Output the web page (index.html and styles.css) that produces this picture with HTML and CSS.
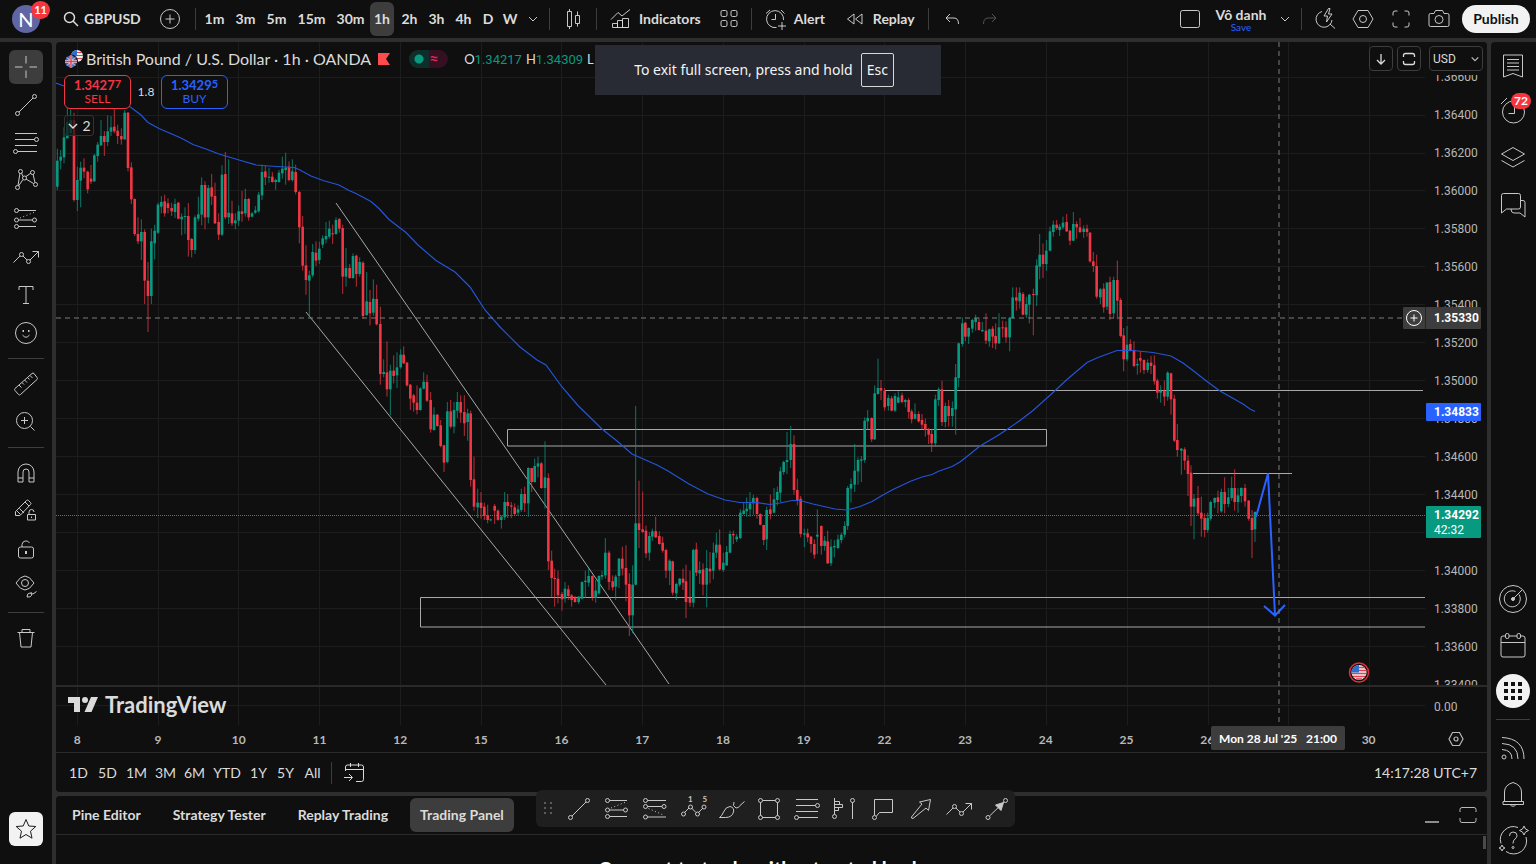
FILE: index.html
```html
<!DOCTYPE html>
<html lang="en">
<head>
<meta charset="UTF-8">
<meta name="viewport" content="width=device-width, initial-scale=1.0">
<title>GBPUSD 1.34292</title>
<link rel="stylesheet" href="styles.css">
</head>
<body>
  <!-- icons used more than once -->
  <svg class="sprite" aria-hidden="true">
    <symbol id="i-trend" viewBox="0 0 28 28"><path d="M7 21 21 7"/><circle cx="5.500" cy="22.500" r="2"/><circle cx="22.500" cy="5.500" r="2"/></symbol>
    <symbol id="i-fib" viewBox="0 0 28 28"><path d="M3 4.500h22M3 10.500h19.500M3 16.500h22M5.500 22.500H25"/><circle cx="24.500" cy="10.500" r="2"/><circle cx="3.500" cy="22.500" r="2"/></symbol>
    <symbol id="i-forecast" viewBox="0 0 28 28"><path d="M6.500 5.500H24M6.500 15H20.500M6.500 21.500H24"/><path stroke-dasharray="1 2.500" d="M8 13 23 7"/><circle cx="4.500" cy="5.500" r="2"/><circle cx="4.500" cy="15" r="2"/><circle cx="22.500" cy="15" r="2"/><circle cx="4.500" cy="21.500" r="2"/></symbol>
    <symbol id="i-path" viewBox="0 0 28 28"><path d="M1.500 19.500 8 13M11 13l4 4M18 17l8.500-8.500M20.500 8.500h6v6"/><circle cx="9.500" cy="11.500" r="2"/><circle cx="16.500" cy="18.500" r="2"/></symbol>
    <symbol id="i-down" viewBox="0 0 12 12"><path d="m2 4 4 4 4-4"/></symbol>
    <symbol id="i-expand" viewBox="0 0 18 18"><path d="M1 6V3.500Q1 1.500 3 1.500h12q2 0 2 2V6M1 12v2.500q0 2 2 2h12q2 0 2-2V12"/></symbol>
  </svg>

  <header class="topbar">
    <button class="avatar" aria-label="Account">N<span class="badge">11</span></button>
    <button class="symbol-search"><svg class="ico" width="18" height="18" viewBox="0 0 18 18" stroke-width="1.500"><circle cx="7.500" cy="7.500" r="5"/><path d="m11 11 5 5"/></svg>GBPUSD</button>
    <button class="tool add-symbol" aria-label="Compare"><svg class="ico" width="28" height="28" viewBox="0 0 28 28"><circle cx="14" cy="14" r="9.500"/><path d="M14 9.500v9M9.500 14h9"/></svg></button>
    <span class="sep"></span>
    <nav class="intervals">
      <button>1m</button><button>3m</button><button>5m</button><button class="wide">15m</button><button class="wide">30m</button><button class="active">1h</button><button class="hour">2h</button><button class="hour">3h</button><button class="hour">4h</button><button class="day">D</button><button class="day">W</button>
    </nav>
    <button class="tool slim" aria-label="More intervals"><svg class="ico" width="12" height="12"><use href="#i-down"/></svg></button>
    <span class="sep"></span>
    <button class="tool big" aria-label="Candles"><svg class="ico" width="28" height="28" viewBox="0 0 28 28"><path d="M8.500 6.500h4v15h-4zM10.500 4v2.500M10.500 21.500V24M16.500 10.500h4v8h-4zM18.500 6.500v4M18.500 18.500v3"/></svg></button>
    <span class="sep"></span>
    <button class="tool text indicators"><svg class="ico" width="28" height="28" viewBox="0 0 28 28"><path d="M5.500 22.500v-4h5v4M10.500 22.500v-7h5v7M15.500 22.500v-9h6v9zM5.500 22.500h16M4 14.500l7-7 4 3.500 8-6.500"/></svg>Indicators</button>
    <button class="tool templates" aria-label="Indicator templates"><svg class="ico" width="28" height="28" viewBox="0 0 28 28"><rect x="6" y="5.500" width="6" height="6" rx="1.500"/><rect x="16" y="5.500" width="6" height="6" rx="1.500"/><rect x="6" y="15.500" width="6" height="6" rx="1.500"/><rect x="16" y="15.500" width="6" height="6" rx="1.500"/></svg></button>
    <span class="sep"></span>
    <button class="tool text alert"><svg class="ico" width="28" height="28" viewBox="0 0 28 28"><path d="M21.500 15a8.500 8.500 0 1 0-7 7.500M13.500 9v5.500H9.500M4 8.500 8 5M22.500 8.500 19 5M20 17v8M16 21h8"/></svg>Alert</button>
    <button class="tool text replay"><svg class="ico" width="28" height="28" viewBox="0 0 28 28"><path d="M13 9v10L6.500 14zM21 9v10l-6.500-5z"/></svg>Replay</button>
    <span class="sep"></span>
    <button class="tool" aria-label="Undo"><svg class="ico" width="28" height="28" viewBox="0 0 28 28"><path d="m12 9-4 4 4 4M8 13h8q4.500 0 4.500 6"/></svg></button>
    <button class="tool dim" aria-label="Redo"><svg class="ico" width="28" height="28" viewBox="0 0 28 28"><path d="m16 9 4 4-4 4M20 13h-8q-4.500 0-4.500 6"/></svg></button>

    <div class="topbar-right">
      <button class="tool" aria-label="Layout setup"><svg class="ico" width="28" height="28" viewBox="0 0 28 28"><rect x="4.500" y="5.500" width="19" height="17" rx="2"/></svg></button>
      <button class="layout-name">Vô danh<small>Save</small></button>
      <button class="tool slim" aria-label="Manage layouts"><svg class="ico" width="12" height="12"><use href="#i-down"/></svg></button>
      <span class="sep"></span>
      <button class="tool" aria-label="Quick search"><svg class="ico" width="28" height="28" viewBox="0 0 28 28"><path d="M11 6.500a8 8 0 1 0 10 8.500M19 19l5 4.500M17.500 3.500 13 11h3.500l-1 6 5.500-8h-3.500l1.500-5.500z"/></svg></button>
      <button class="tool" aria-label="Settings"><svg class="ico" width="28" height="28" viewBox="0 0 28 28"><path d="M9 5.500h10L24 14l-5 8.500H9L4 14z"/><circle cx="14" cy="14" r="3.500"/></svg></button>
      <button class="tool" aria-label="Fullscreen"><svg class="ico" width="28" height="28" viewBox="0 0 28 28"><path d="M6 10.500V8q0-2 2-2h2.500M17.500 6H20q2 0 2 2v2.500M22 17.500V20q0 2-2 2h-2.500M10.500 22H8q-2 0-2-2v-2.500"/></svg></button>
      <button class="tool" aria-label="Take a snapshot"><svg class="ico" width="28" height="28" viewBox="0 0 28 28"><path d="M5.500 8.500H9l1.500-3h7l1.500 3h3.500q1.500 0 1.500 1.500v10q0 1.500-1.500 1.500h-17Q4 21.500 4 20V10q0-1.500 1.500-1.500z"/><circle cx="14" cy="14.500" r="4"/></svg></button>
      <button class="publish">Publish</button>
    </div>
  </header>

  <div class="workspace">
    <aside class="left-tools">
      <button class="on" aria-label="Cross"><svg class="ico" width="28" height="28" viewBox="0 0 28 28"><path d="M14 3v7.500M14 17.500V25M3 14h7.500M17.500 14H25"/></svg></button>
      <button aria-label="Trend line"><svg class="ico" width="28" height="28"><use href="#i-trend"/></svg></button>
      <button aria-label="Fib retracement"><svg class="ico" width="28" height="28"><use href="#i-fib"/></svg></button>
      <button aria-label="Patterns"><svg class="ico" width="28" height="28" viewBox="0 0 28 28"><path d="m8 6-2 12.500M9.500 6 11 9.500M14 9.500 19 6M21 7l2 8.500M6.500 19 11 12.500M14 12l7.500 4.500"/><circle cx="8.500" cy="4.500" r="2"/><circle cx="20.500" cy="5.500" r="2"/><circle cx="12.500" cy="11" r="2"/><circle cx="5.500" cy="20.500" r="2"/><circle cx="23.500" cy="17.500" r="2"/></svg></button>
      <button aria-label="Forecasting"><svg class="ico" width="28" height="28"><use href="#i-forecast"/></svg></button>
      <button aria-label="Arrows"><svg class="ico" width="28" height="28"><use href="#i-path"/></svg></button>
      <button aria-label="Text"><svg class="ico" width="28" height="28" viewBox="0 0 28 28"><path d="M7 9V5.500h14V9M14 5.500v17M11 22.500h6"/></svg></button>
      <button aria-label="Icons"><svg class="ico" width="28" height="28" viewBox="0 0 28 28"><circle cx="14" cy="14" r="10.500"/><path d="M10.500 16q3.500 4.500 7 0"/><path stroke-width="2" d="M10.500 12h1.500M16 12h1.500"/></svg></button>
      <hr>
      <button aria-label="Measure"><svg class="ico" width="28" height="28" viewBox="0 0 28 28"><path d="M20 3.500 3 18.500q-1 1 0 2l3.500 4q1 1 2 0l16.500-15q1-1 0-2l-3-4q-1-1-2 0zM7 15l2.500 2.500M10 12.500l2 2M12.500 10l2.500 2.500M15.500 7.500l2 2M18 5.500l2.500 2.500"/></svg></button>
      <button aria-label="Zoom in"><svg class="ico" width="28" height="28" viewBox="0 0 28 28"><circle cx="12.500" cy="12.500" r="8"/><path d="m18.500 18.500 4 4M12.500 9v7M9 12.500h7"/></svg></button>
      <hr>
      <button aria-label="Magnet"><svg class="ico" width="28" height="28" viewBox="0 0 28 28"><path d="M6 23V13a8 8 0 0 1 16 0v10h-5V13a3 3 0 0 0-6 0v10zM6 19h5M17 19h5"/></svg></button>
      <button aria-label="Keep drawing"><svg class="ico" width="28" height="28" viewBox="0 0 28 28"><path d="M3.500 18.500v-4L14.500 3.500q1-1 2 0l2 2q1 1 0 2L8 18.500zM13 5l4 4M5 14l3.500 3.500M7.500 11.500 12 16M15.500 17.500h8v5.500h-8zM17 17.500V15a2.500 2.500 0 0 1 5 0M19.500 19.500v1.500"/></svg></button>
      <button aria-label="Lock drawings"><svg class="ico" width="28" height="28" viewBox="0 0 28 28"><rect x="6.500" y="12" width="15" height="11" rx="2"/><path d="M10 12V9.500a4 4 0 0 1 7.500-1.500"/><path stroke-width="2" d="M14 16v3"/></svg></button>
      <button aria-label="Hide drawings"><svg class="ico" width="28" height="28" viewBox="0 0 28 28"><path d="M4 10q9-14 18 0-9 14-18 0z"/><circle cx="13" cy="10" r="3.500"/><path d="M15 24q0-4 3-4 2.500.500 1.500 2.500T15 24zM19 19q0 2 2 2l3.500-2.500"/></svg></button>
      <hr>
      <button aria-label="Remove"><svg class="ico" width="28" height="28" viewBox="0 0 28 28"><path d="M5.500 8.500h17M10 8.500v-3h8v3M7.500 8.500 9 23h10l1.500-14.500"/></svg></button>
      <button class="star" aria-label="Favorite tools"><svg width="28" height="28" viewBox="0 0 28 28" fill="none" stroke="#1c1c1c"><path d="m14 4.500 2.800 6.500 7 .500-5.300 4.700 1.500 7-6-3.700-6 3.700 1.500-7-5.300-4.700 7-.500z"/></svg></button>
    </aside>

    <main class="center">
      <section class="chart-card">
        <div class="plot-row">
          <div class="plot">
            <svg id="chart" class="chart" viewBox="56 42 1369 683" preserveAspectRatio="none">
              <g id="grid" stroke="#1d1d1d"></g>
              <path stroke="#2a2a2a" stroke-width="2" d="M56 686H1425"/>
              <path stroke="#089981" stroke-dasharray="1 1" d="M56 515.500H1425"/>
              <g stroke="#a8a8a8" fill="none">
                <path d="M507.500 429.500H1046.500V446H507.500zM1425 597.500H420.500V627H1425M885 390.500H1423M1193 473.500H1292"/>
                <path d="M336 203 669 684M306 312 606 685"/>
              </g>
              <g id="candles"></g>
              <polyline fill="none" stroke="#2455d8" stroke-width="1.200" points="56,83 64,86 90,93 115,99 131,107.500 141,115 148,122.500 159,128.500 181,138 193,144.500 206,149 219,154 239,160 256,165 269,166 294,167.500 299,169.500 311,176 323,180.500 339,185 349,190.500 356,193.500 371,201.500 379,208.500 389,219.500 406,232.500 418,245 436,260.500 455,272 470,287 485,310 500,327 520,347 537,360 546,365 562,387 578,405.500 602,429 617,441 632,454 657,465 668,471 689,484 708,494 725,500 740,502.500 757,502.500 770,504.500 780,503 792,500.500 800,500.500 813,504 835,509 847,510 860,506.500 872,501.500 882,495.500 893,489.500 910,481.500 922,477 932,474.500 938,471.500 952,466.500 960,462 967,456.500 980,446 997,436 1007,429.500 1020,420.500 1033,410.500 1052,393.500 1067,379.500 1087,362.500 1098,357.500 1117,350.500 1133,350.500 1153,352.500 1171,356 1183,363 1193,370.500 1207,381.500 1220,391 1243,404 1250,409 1255,411.500"/>
              <path fill="none" stroke="#2962ff" stroke-width="2" d="m1256 517 12-43.500 7 142M1264 606l11 9.500 10-10.500"/>
              <path stroke="#7d7d7d" stroke-dasharray="5 4" d="M56 318H1404M1279 42V725"/>
              <g>
                <circle cx="1359" cy="672.500" r="9.500" fill="#0f0f0f" stroke="#e0303d" stroke-width="1.500"/>
                <circle cx="1359" cy="672.500" r="7.500" fill="#eee"/>
                <path stroke="#e2404b" stroke-width="1.500" d="M1359 667.500h6M1359 670.500h7.500M1352 673.500h14.500M1353 676.500h12M1356 679h6"/>
                <path fill="#2d6fd0" d="M1359 665v7.500h-7.500a7.500 7.500 0 0 1 7.500-7.500z"/>
              </g>
            </svg>

            <div class="legend">
              <div class="legend-title">
                <svg width="20" height="20" viewBox="0 0 20 20"><circle cx="13" cy="7" r="6" fill="#eee"/><path stroke="#e2404b" d="M13 3.500h5M13 6.500h6M9 9.500h9"/><path fill="#2d6fd0" d="M13 1v6H7a6 6 0 0 1 6-6z"/><circle cx="7" cy="12.500" r="7" fill="#0f0f0f"/><circle cx="7" cy="12.500" r="6" fill="#3c5fb4"/><path stroke="#eee" stroke-width="2.500" d="M7 6.500v12M1 12.500h12"/><path stroke="#eee" d="m3 8.500 8 8M11 8.500l-8 8"/><path stroke="#e2404b" stroke-width="1.500" d="M7 6.500v12M1 12.500h12"/></svg>
                <h1>British Pound / U.S. Dollar · 1h · OANDA</h1>
                <svg class="flag" width="14" height="12" viewBox="0 0 14 12"><path fill="#ff4b4b" d="M1 0h12l-4 6 4 6H1z"/></svg>
                <span class="status"><i></i><b>≈</b></span>
                <span class="ohlc">O<em>1.34217</em></span>
                <span class="ohlc">H<em>1.34309</em></span>
                <span class="ohlc">L</span>
              </div>
              <div class="quotes">
                <button class="quote sell"><strong>1.3427<sup>7</sup></strong>SELL</button>
                <span class="spread">1.8</span>
                <button class="quote buy"><strong>1.3429<sup>5</sup></strong>BUY</button>
              </div>
              <button class="collapse"><svg class="ico" width="12" height="12" stroke-width="1.500"><use href="#i-down"/></svg>2</button>
            </div>

            <div class="pane-buttons">
              <button aria-label="Move pane down"><svg class="ico" width="14" height="14" viewBox="0 0 14 14" stroke-width="1.300"><path d="M7 2v10M3 8l4 4 4-4"/></svg></button>
              <button aria-label="Maximize chart"><svg class="ico" width="12" height="12" viewBox="0 0 12 12" stroke-width="1.300"><path d="M.500 4V2.500q0-2 2-2h7q2 0 2 2V4M.500 8v1.500q0 2 2 2h7q2 0 2-2V8"/></svg></button>
            </div>

            <div class="logo">
              <svg width="32" height="18" viewBox="0 0 32 18" fill="#dbdbdb"><path d="M1 1h12v15H7V7H1z"/><circle cx="18" cy="4" r="3"/><path d="M24 1h7l-6.500 15h-7z"/></svg>
              TradingView
            </div>
          </div>

          <div class="price-axis">
            <div class="currency">
              <select aria-label="Currency"><option>USD</option></select>
              <svg class="ico" width="10" height="10" stroke-width="1.500"><use href="#i-down"/></svg>
            </div>
            <div class="prices">
              <span>1.36600</span><span>1.36400</span><span>1.36200</span><span>1.36000</span><span>1.35800</span><span>1.35600</span><span>1.35400</span><span>1.35200</span><span>1.35000</span><span>1.34800</span><span>1.34600</span><span>1.34400</span><span></span><span>1.34000</span><span>1.33800</span><span>1.33600</span><span>1.33400</span>
            </div>
            <div class="zero">0.00</div>
            <div class="tag tag-cross"><button aria-label="Add alert at price"><svg class="ico" width="18" height="18" viewBox="0 0 18 18"><circle cx="9" cy="9" r="7.500"/><path d="M9 5.500v7M5.500 9h7"/></svg></button><span>1.35330</span></div>
            <div class="tag tag-ma">1.34833</div>
            <div class="tag tag-last">1.34292<small>42:32</small></div>
          </div>
        </div>

        <div class="time-row">
          <div class="times">
            <span>8</span><span>9</span><span>10</span><span>11</span><span>12</span><span>15</span><span>16</span><span>17</span><span>18</span><span>19</span><span>22</span><span>23</span><span>24</span><span>25</span><span>26</span><span></span><span>30</span>
          </div>
          <div class="time-tag">Mon 28 Jul '25 &nbsp; 21:00</div>
          <button class="axis-settings" aria-label="Axis settings"><svg class="ico" width="16" height="16" viewBox="0 0 16 16" stroke-width="1.200"><path d="M4.500 1.500h7L15 8l-3.500 6.500h-7L1 8z"/><circle cx="8" cy="8" r="2"/></svg></button>
        </div>

        <div class="range-row">
          <button>1D</button><button>5D</button><button>1M</button><button>3M</button><button>6M</button><button class="ytd">YTD</button><button class="year">1Y</button><button class="year">5Y</button><button class="year">All</button>
          <span class="sep"></span>
          <button class="goto" aria-label="Go to"><svg class="ico" width="28" height="28" viewBox="0 0 28 28"><path d="M5.500 12V8q0-2 2-2h14q2 0 2 2v12.500q0 2-2 2H16M5.500 10.500h18M10.500 4v4M18.500 4v4M4 18.500h8M9 15l3.500 3.500L9 22"/></svg></button>
          <button class="clock">14:17:28 UTC+7</button>
        </div>
      </section>

      <section class="bottom-panel">
        <div class="tabs">
          <button>Pine Editor</button>
          <button>Strategy Tester</button>
          <button>Replay Trading</button>
          <button class="active">Trading Panel</button>
          <button class="panel-icon first" aria-label="Minimize panel"><svg class="ico" width="18" height="18" viewBox="0 0 18 18" stroke-width="1.300"><path d="M2 16h14"/></svg></button>
          <button class="panel-icon" aria-label="Maximize panel"><svg class="ico" width="18" height="18"><use href="#i-expand"/></svg></button>
        </div>
        <div class="panel-body"><h2>Connect to trade with a trusted broker</h2><span class="thumb"></span></div>
      </section>

      <div class="favorites">
        <svg class="grip" width="10" height="14" viewBox="0 0 10 14" fill="#5c5c5c"><path d="M1 0h2v2H1zM7 0h2v2H7zM1 5h2v2H1zM7 5h2v2H7zM1 10h2v2H1zM7 10h2v2H7z"/></svg>
        <button aria-label="Trend line"><svg class="ico" width="28" height="28"><use href="#i-trend"/></svg></button>
        <button aria-label="Long position"><svg class="ico" width="28" height="28"><use href="#i-forecast"/></svg></button>
        <button aria-label="Short position"><svg class="ico" width="28" height="28" viewBox="0 0 28 28"><path d="M6.500 5.500H25M6.500 11.500H21M6.500 22H25"/><path stroke-dasharray="1 2.500" d="m7.500 13.500 16 7"/><circle cx="4.500" cy="5.500" r="2"/><circle cx="4.500" cy="11.500" r="2"/><circle cx="23" cy="11.500" r="2"/><circle cx="4.500" cy="22" r="2"/></svg></button>
        <button aria-label="Elliott wave"><svg class="ico" width="28" height="28" viewBox="0 0 28 28"><path d="m5.500 17.500 4.500-4.500M12.500 13l4.500 4.500M19.500 17.500 24 13"/><circle cx="4.500" cy="19" r="2"/><circle cx="11.500" cy="12" r="2"/><circle cx="18.500" cy="19" r="2"/><circle cx="25" cy="12" r="2"/><text x="9" y="6.500">1</text><text x="23.500" y="6.500">5</text></svg></button>
        <button aria-label="Brush"><svg class="ico" width="28" height="28" viewBox="0 0 28 28"><path d="M2.500 22.500q2.500-1.500 4-5.500 2.500-5.500 6.500-5.500 4.500 1 3.500 5.500-1.500 5.500-8 5.500zM17 7q-2 4 2 6 3 0 4-2.500l4.500-4"/></svg></button>
        <button aria-label="Rectangle"><svg class="ico" width="28" height="28" viewBox="0 0 28 28"><path d="M7.500 5.500h13M7.500 22.500h13M5.500 7.500v13M22.500 7.500v13"/><circle cx="5.500" cy="5.500" r="2"/><circle cx="22.500" cy="5.500" r="2"/><circle cx="5.500" cy="22.500" r="2"/><circle cx="22.500" cy="22.500" r="2"/></svg></button>
        <button aria-label="Fib retracement"><svg class="ico" width="28" height="28"><use href="#i-fib"/></svg></button>
        <button aria-label="Fixed range volume"><svg class="ico" width="28" height="28" viewBox="0 0 28 28"><path d="M3.500 3v16.500M3.500 6.500h5v3h-5M3.500 9.500h8v3h-8M3.500 12.500h4v3h-4M21.500 7.500V24"/><circle cx="3.500" cy="21.500" r="2"/><circle cx="21.500" cy="5.500" r="2"/></svg></button>
        <button aria-label="Callout"><svg class="ico" width="28" height="28" viewBox="0 0 28 28"><path d="M5.500 20V4.500h18v13h-13L7.500 21"/><circle cx="5.500" cy="22.500" r="2"/></svg></button>
        <button aria-label="Arrow marker"><svg class="ico" width="28" height="28" viewBox="0 0 28 28"><path d="m23.500 4.500-2 11-2.500-2.500L6 23.500q-2 0-1.500-1.500L15 9l-2.500-2z"/></svg></button>
        <button aria-label="Path"><svg class="ico" width="28" height="28"><use href="#i-path"/></svg></button>
        <button aria-label="Arrow"><svg class="ico" width="28" height="28" viewBox="0 0 28 28"><path d="M6.500 21 21 7"/><path fill="currentColor" d="m20.500 7.500-2.500 8-5.500-5.500z"/><circle cx="5" cy="22.500" r="2"/><circle cx="22.500" cy="5.500" r="2"/></svg></button>
      </div>
    </main>

    <aside class="right-tools">
      <button aria-label="Watchlist"><svg class="ico" width="30" height="30" viewBox="0 0 30 30"><path d="M5.500 4h19v22L15 22.500 5.500 26zM9 8.500h12M9 12h12M9 15.500h12M9 19h12"/></svg></button>
      <button aria-label="Alerts"><svg class="ico" width="30" height="30" viewBox="0 0 30 30"><circle cx="15.500" cy="15" r="11"/><path d="M16.500 8.500v8h-6M3 7l6-6"/></svg><span class="badge">72</span></button>
      <button aria-label="Object tree"><svg class="ico" width="30" height="30" viewBox="0 0 30 30"><path d="m15 4.500 11.500 6.500L15 17.500 3.500 11zM3.500 17.500 15 24l11.500-6.500"/></svg></button>
      <button aria-label="Chats"><svg class="ico" width="30" height="30" viewBox="0 0 30 30"><path d="M5.500 4.500h15q2 0 2 2V18q0 2-2 2H8.500l-5 4V6.500q0-2 2-2zM22.500 11.500h2.500q2 0 2 2V28l-5-4h-6q-3 0-3-4"/></svg></button>
      <button class="push" aria-label="Screeners"><svg class="ico" width="30" height="30" viewBox="0 0 30 30"><circle cx="15" cy="15" r="13.500"/><path d="M21 10.500a8 8 0 1 1-3.500-3M15 15l9-9"/><circle cx="15" cy="15" r="1.500" fill="currentColor"/></svg></button>
      <button aria-label="Calendars"><svg class="ico" width="30" height="30" viewBox="0 0 30 30"><rect x="3" y="6" width="24" height="21" rx="2"/><path d="M3 12.500h24"/><rect x="7.500" y="3.500" width="3.500" height="5" rx="1.500" fill="#0f0f0f"/><rect x="19" y="3.500" width="3.500" height="5" rx="1.500" fill="#0f0f0f"/></svg></button>
      <button class="products" aria-label="Products"><svg width="20" height="20" viewBox="0 0 20 20" fill="#111"><path d="M1 1h4v4H1zM8 1h4v4H8zM15 1h4v4h-4zM1 8h4v4H1zM8 8h4v4H8zM15 8h4v4h-4zM1 15h4v4H1zM8 15h4v4H8zM15 15h4v4h-4z"/></svg></button>
      <hr>
      <button aria-label="Streams"><svg class="ico" width="30" height="30" viewBox="0 0 30 30"><circle cx="6" cy="24" r="2"/><path d="M4 4.500q22 1 22 21.500M4 10.500q16 .500 16 15.500M4 16.500q10 .500 10 9.500"/></svg></button>
      <button aria-label="Notifications"><svg class="ico" width="30" height="30" viewBox="0 0 30 30"><path d="M6.500 22.500V13q0-7 8.500-9.500 8.500 2.500 8.500 9.500v9.500M5 22.500h20.500v3H5zM12 25.500q3 3.500 6 0"/></svg></button>
      <button aria-label="Help"><svg class="ico" width="30" height="30" viewBox="0 0 30 30"><path d="M20 2.500a13 13 0 0 0-17 16M28 12a13 13 0 0 1-20 14.500M11.500 11q0-4 3.500-4 4 0 4 3.500 0 2-2 3.500t-2 4.500"/><circle cx="15" cy="22.500" r="1"/><path d="m26 1 1.500 3L30.500 5.500 27.500 7 26 10l-1.500-3-3-1.500 3-1.500zM4 20l1 2 2 1-2 1-1 2-1-2-2-1 2-1z"/></svg></button>
    </aside>
  </div>

  <div class="toast">To exit full screen, press and hold <kbd>Esc</kbd></div>

  <script src="chart.js"></script>
</body>
</html>
```
FILE: styles.css
```css
* {
  box-sizing: border-box;
}
body {
  margin: 0;
  height: 100vh;
  display: flex;
  flex-direction: column;
  gap: 4px;
  overflow: hidden;
  background: #2e2e2e;
  color: #dbdbdb;
  font-family: "Trebuchet MS", Lato, sans-serif;
  font-size: 14px;
  line-height: 16px;
}
button {
  padding: 0;
  border: 0;
  background: none;
  color: inherit;
  font: inherit;
  cursor: pointer;
}
svg {
  display: block;
  flex: none;
}
.sprite {
  position: absolute;
  width: 0;
  height: 0;
}
.ico {
  fill: none;
  stroke: currentColor;
  overflow: visible;
}
.ico text {
  fill: currentColor;
  stroke: none;
  font-size: 8px;
  font-weight: bold;
}

/* top bar */
.topbar {
  display: flex;
  align-items: center;
  height: 38px;
  flex: none;
  padding: 0 6px 0 12px;
  background: #0f0f0f;
  font-weight: bold;
}
.avatar {
  position: relative;
  width: 28px;
  height: 28px;
  border-radius: 50%;
  background: #5f66a3;
  color: #fff;
  font-size: 20px;
  font-weight: normal;
}
.badge {
  position: absolute;
  top: -4px;
  right: -10px;
  min-width: 18px;
  height: 18px;
  padding: 0 3px;
  border-radius: 9px;
  background: #f7353f;
  color: #fff;
  font-size: 11px;
  line-height: 18px;
  font-weight: bold;
}
.symbol-search {
  display: flex;
  align-items: center;
  gap: 4px;
  width: 84px;
  margin-left: 22px;
}
.tool {
  display: flex;
  align-items: center;
  justify-content: center;
  width: 38px;
  height: 34px;
}
.tool .ico {
  opacity: 0.9;
}
.tool.slim {
  width: 24px;
}
.tool.big {
  width: 46px;
}
.tool.dim {
  color: #5a5a5a;
}
.tool.text {
  width: auto;
  gap: 4px;
}
.add-symbol {
  margin: 0 6px 0 5px;
}
.sep {
  width: 1px;
  height: 22px;
  background: #3d3d3d;
}
.intervals {
  display: flex;
  margin-left: 3px;
}
.intervals button {
  width: 31px;
  height: 34px;
}
.intervals .wide {
  width: 39px;
}
.intervals .active {
  width: 24px;
  margin-right: 2px;
  border-radius: 6px;
  background: #3d3d3d;
}
.intervals .hour {
  width: 27px;
}
.intervals .day {
  width: 22px;
}
.intervals + .tool {
  margin-right: 4px;
}
.indicators {
  padding: 0 13px 0 10px;
}
.templates {
  width: 30px;
  margin-right: 7px;
}
.alert {
  padding: 0 10px;
}
.replay {
  padding: 0 13px 0 6px;
}
.replay + .sep {
  margin-right: 4px;
}
.topbar-right {
  display: flex;
  align-items: center;
  margin-left: auto;
}
.layout-name {
  width: 64px;
}
.layout-name small {
  display: block;
  color: #2962ff;
  font-size: 10px;
  line-height: 8px;
  font-weight: normal;
}
.topbar-right .slim {
  margin-right: 4px;
}
.topbar-right .sep {
  margin-right: 4px;
}
.publish {
  width: 68px;
  height: 28px;
  margin-left: 4px;
  border-radius: 14px;
  background: #f2f2f2;
  color: #0f0f0f;
  font-weight: bold;
}

/* main columns */
.workspace {
  display: flex;
  flex: 1;
  gap: 4px;
  min-height: 0;
}
.left-tools {
  display: flex;
  flex-direction: column;
  align-items: center;
  gap: 4px;
  width: 52px;
  padding: 8px 0 18px;
  border-radius: 0 4px 0 0;
  background: #0f0f0f;
  color: #c8c8c8;
}
.left-tools button {
  display: flex;
  align-items: center;
  justify-content: center;
  width: 34px;
  height: 34px;
  border-radius: 6px;
}
.left-tools .on {
  background: #3d3d3d;
}
.left-tools .star {
  margin-top: auto;
  background: #f2f2f2;
}
.left-tools hr {
  width: 36px;
  height: 1px;
  margin: 4px 0;
  border: 0;
  background: #3d3d3d;
}
.center {
  position: relative;
  display: flex;
  flex: 1;
  flex-direction: column;
  gap: 4px;
  min-width: 0;
}
.right-tools {
  display: flex;
  flex-direction: column;
  align-items: center;
  gap: 12px;
  width: 45px;
  padding: 7px 1px 7px 0;
  border-radius: 4px 0 0 0;
  background: #0f0f0f;
  color: #c8c8c8;
}
.right-tools button {
  position: relative;
  display: flex;
  align-items: center;
  justify-content: center;
  width: 34px;
  height: 34px;
}
.right-tools .badge {
  top: -2px;
  right: -1px;
  height: 16px;
  font-size: 12px;
  line-height: 16px;
}
.right-tools .push {
  margin-top: auto;
}
.right-tools .products {
  border-radius: 50%;
  background: #f2f2f2;
}
.right-tools hr {
  width: 34px;
  height: 1px;
  margin: -1px 0;
  border: 0;
  background: #3d3d3d;
}

/* chart */
.chart-card {
  display: flex;
  flex: 1;
  flex-direction: column;
  min-height: 0;
  border-radius: 4px;
  background: #0f0f0f;
  overflow: hidden;
}
.plot-row {
  display: flex;
  flex: 1;
  min-height: 0;
}
.plot {
  position: relative;
  flex: 1;
  min-width: 0;
}
.chart {
  width: 100%;
  height: 100%;
}
.legend {
  position: absolute;
  top: 8px;
  left: 8px;
}
.legend-title {
  display: flex;
  align-items: center;
  height: 18px;
}
.legend h1 {
  margin: 0 6px 0 2px;
  font-size: 16px;
  line-height: 20px;
  font-weight: normal;
  white-space: nowrap;
}
.status {
  display: flex;
  margin: 0 16px 0 18px;
  border-radius: 9px;
  overflow: hidden;
  background: #351020;
}
.status i {
  width: 20px;
  height: 18px;
  background: radial-gradient(circle, #089981 4px, #0d2e29 5px);
}
.status b {
  width: 19px;
  color: #e0245e;
  font-size: 16px;
  line-height: 16px;
}
.ohlc {
  margin-right: 4px;
  font-size: 13px;
}
.ohlc em {
  color: #089981;
  font-family: Roboto, sans-serif;
  font-style: normal;
}
.quotes {
  display: flex;
  align-items: center;
  margin-top: 7px;
}
.quote {
  width: 67px;
  height: 34px;
  border: 1px solid;
  border-radius: 6px;
  background: #0f0f0f;
  font-size: 12px;
  line-height: 14px;
}
.quote strong {
  display: block;
  font-size: 13px;
}
.quote sup {
  font-size: 11px;
  line-height: 0;
  vertical-align: 2px;
}
.sell {
  color: #f23645;
}
.buy {
  color: #2962ff;
}
.spread {
  width: 30px;
  font-size: 12px;
  text-align: center;
}
.collapse {
  display: flex;
  align-items: center;
  justify-content: center;
  gap: 3px;
  width: 30px;
  height: 21px;
  margin-top: 6px;
  border: 1px solid #333;
  border-radius: 3px;
  background: rgba(15, 15, 15, 0.7);
}
.pane-buttons {
  position: absolute;
  top: 4px;
  right: 4px;
  display: flex;
  gap: 4px;
}
.pane-buttons button {
  display: flex;
  align-items: center;
  justify-content: center;
  width: 24px;
  height: 25px;
  border: 1px solid #3d3d3d;
  border-radius: 4px;
  background: #0f0f0f;
}
.logo {
  position: absolute;
  left: 11px;
  bottom: 8px;
  display: flex;
  align-items: center;
  gap: 6px;
  font-size: 22px;
  line-height: 24px;
  font-weight: bold;
}

/* price scale */
.price-axis {
  position: relative;
  display: flex;
  flex-direction: column;
  width: 62px;
  color: #b8b8b8;
  font-family: Roboto, sans-serif;
  font-size: 12px;
}
.currency {
  position: absolute;
  z-index: 1;
  top: 0;
  left: 0;
  width: 62px;
  height: 33px;
  padding: 4px;
  background: #0f0f0f;
}
.currency select {
  width: 54px;
  height: 25px;
  padding: 0 3px;
  border: 1px solid #3d3d3d;
  border-radius: 4px;
  background: #0f0f0f;
  color: #dbdbdb;
  font: inherit;
  appearance: none;
}
.currency svg {
  position: absolute;
  top: 12px;
  right: 7px;
}
.prices {
  display: flex;
  flex: 1;
  flex-direction: column;
  min-height: 0;
  padding: 16px 0 0 9px;
  overflow: hidden;
}
.prices span {
  flex: none;
  height: 38px;
  line-height: 38px;
}
.zero {
  height: 40px;
  padding-left: 9px;
  border-top: 2px solid #2a2a2a;
  line-height: 40px;
}
.tag {
  position: absolute;
  left: 1px;
  width: 55px;
  padding-left: 8px;
  border-radius: 1px;
  color: #fff;
  font-weight: bold;
  line-height: 18px;
}
.tag-cross {
  top: 265px;
  left: -22px;
  display: flex;
  width: 78px;
  padding: 0;
  background: #3d3d3d;
  line-height: 22px;
}
.tag-cross button {
  padding: 0 2px;
  border-right: 1px solid #262626;
}
.tag-cross span {
  padding-left: 8px;
}
.tag-ma {
  top: 361px;
  background: #2962ff;
}
.tag-last {
  top: 464px;
  padding-top: 1px;
  padding-bottom: 1px;
  background: #089981;
  line-height: 16px;
}
.tag-last small {
  display: block;
  font-size: 12px;
  line-height: 14px;
  font-weight: normal;
}

/* time scale */
.time-row {
  position: relative;
  display: flex;
  height: 28px;
  border-bottom: 1px solid #2a2a2a;
  font-size: 12px;
  font-weight: bold;
  color: #b8b8b8;
}
.times {
  display: flex;
  flex: 1;
  margin: 0 16px 0 -19px;
}
.times span {
  flex: 1;
  line-height: 30px;
  text-align: center;
}
.time-tag {
  position: absolute;
  top: 1px;
  right: 142px;
  width: 134px;
  padding-top: 1px;
  background: #3d3d3d;
  color: #fff;
  line-height: 23px;
  text-align: center;
  border-radius: 2px;
}
.axis-settings {
  display: flex;
  align-items: center;
  justify-content: center;
  width: 62px;
}
.range-row {
  display: flex;
  align-items: center;
  height: 39px;
  padding: 0 10px 0 8px;
}
.range-row button {
  width: 29px;
}
.range-row .ytd {
  width: 36px;
}
.range-row .year {
  width: 27px;
}
.range-row .sep {
  margin: 0 8px 0 5px;
}
.range-row .clock {
  width: auto;
  margin-left: auto;
}

/* bottom panel */
.bottom-panel {
  flex: none;
  height: 68px;
  border-radius: 4px 4px 0 0;
  background: #0f0f0f;
  overflow: hidden;
}
.tabs {
  display: flex;
  align-items: center;
  gap: 12px;
  height: 39px;
  padding: 0 10px 0 6px;
  border-bottom: 1px solid #2a2a2a;
}
.tabs button {
  height: 34px;
  padding: 0 10px;
  border-radius: 6px;
  font-weight: bold;
}
.tabs .active {
  background: #3d3d3d;
}
.tabs .panel-icon {
  padding: 0;
  color: #b8b8b8;
}
.tabs .first {
  margin-left: auto;
  margin-right: 6px;
}
.panel-body {
  display: flex;
  justify-content: center;
}
.panel-body h2 {
  flex: 1;
  margin: 20px 0 0;
  font-size: 20px;
  line-height: 28px;
  text-align: center;
  color: #fff;
}
.thumb {
  width: 3px;
  height: 13px;
  margin: 1px;
  background: #4a4a4a;
}

/* floating drawing favorites */
.favorites {
  position: absolute;
  left: 480px;
  bottom: 37px;
  display: flex;
  align-items: center;
  gap: 10px;
  height: 37px;
  padding: 0 4px 0 7px;
  border-radius: 6px;
  background: #1f1f1f;
  color: #c8c8c8;
}
.grip {
  margin-right: 2px;
}

/* browser full screen hint */
.toast {
  position: absolute;
  top: 45px;
  left: 50%;
  display: flex;
  align-items: center;
  justify-content: center;
  gap: 8px;
  width: 346px;
  height: 50px;
  padding-right: 8px;
  transform: translateX(-50%);
  background: #282b33;
  color: #f4f4f4;
  font-family: "Segoe UI", "Noto Sans", sans-serif;
}
.toast kbd {
  padding: 8px 5px;
  border: 1px solid #d8d8d8;
  border-radius: 2px;
  font: inherit;
}
```
FILE: chart.js
```js
const NS = 'http://www.w3.org/2000/svg';
const UP = '#089981';
const DOWN = '#f23645';

// Each block has an origin; bars are "x colour high top bottom low", three units per pixel.
const blocks = [
  { x: 56, y: 100, bars: `
4g 146 182 260 270,14g 150 170 182 208,24g 82 112 172 190,34g 20 66 115 115,44g 28 60 100 105,54r 38 60 300 305,
64g 200 240 300 333,74g 185 203 242 322,84r 175 203 215 235,95r 212 215 268 280,105r 195 236 245 252,115g 162 166 244 246,
125g 126 134 168 185,135g 60 108 136 138,145r 93 108 126 168,155g 46 94 126 138,165g 48 82 95 108,175r 26 80 94 100,
185r 74 92 108 132,196r 85 108 118 134,206g 30 38 118 120,216r 36 38 204 214,226r 187 202 298 312,236r 295 297 402 408,
246r 352 402 424 432,256g 358 396 424 480,266r 388 396 542 612,276r 486 542 588 696,286g 386 424 588 612,296g 374 392 430 478,
306g 308 314 398 402,316g 288 306 320 340,326r 284 304 340 350,336r 295 310 324 340,347r 308 324 334 348,357g 296 312 336 354,
367r 306 308 356 358,377g 340 350 358 406,387g 322 348 351 402,397r 309 348 420 470,407r 414 417 450 472,417g 346 352 450 462,
427g 290 343 356 364,437g 232 255 344 376,447r 244 255 352 388,457g 255 264 352 370,467r 222 262 290 315,477r 248 288 370 372,
488r 340 366 404 420,498g 196 224 404 408,508r 156 222 352 358,518g 178 338 352 372,528r 302 340 370 378,538g 340 361 370 388,
548g 316 334 362 378,558r 273 334 342 365,568g 266 297 340 350,578r 294 297 352 362,588g 336 340 350 352,598g 318 331 338 342,
608g 276 284 334 338,618g 194 216 286 300,628r 197 214 232 255,639g 203 230 232 248,649r 216 230 246 248,659g 236 240 246 270,
669g 210 218 246 248,679g 170 206 220 236,689g 158 203 210 254,699r 184 200 240 244,709g 178 214 240 245,719r 194 216 276 283,
730r 273 276 382 430,740r 348 380 497 512,750r 436 496 540 584,760g 512 526 542 650,770g 432 456 526 532,780r 424 458 482 498,
790g 425 446 480 492,800g 406 415 434 444,810g 366 408 418 430,820g 362 386 410 416,830r 374 400 403 432,840g 352 360 402 404,
850r 354 357 386 398,860r 374 384 530 582,870g 444 504 530 560,881r 492 504 534 536,891g 460 468 534 536,901r 464 467 522 560,
911g 472 486 522 530,921r 484 488 648 656,932g 516 604 645 648,942r 570 606 640 676,952g 538 596 638 648,962r 554 597 673 676,
973r 620 672 822 854,983g 778 816 822 832,993r 724 817 868 890,1003g 794 812 868 946,1013r 766 812 828 850,1023g 757 802 826 864,
1034g 748 764 802 806,1043r 739 764 790 792` },
  { x: 400, y: 360, bars: `
21r 6 8 76 80,31r 72 74 116 150,41r 102 106 128 155,51r 76 128 150 163,61g 82 85 150 152,71g 37 65 86 88,
81r 44 66 122 126,92r 96 120 208 218,102g 142 164 210 212,112r 162 164 198 200,122r 180 196 258 262,132r 254 256 308 336,
142g 126 154 306 310,152r 120 154 200 205,162g 126 150 200 220,172g 96 126 152 174,182r 106 126 158 188,193r 106 156 190 228,
203g 146 160 186 242,212r 152 160 360 380,222r 290 358 440 452,233g 386 428 442 474,243r 396 428 444 476,253r 428 440 468 480,
263r 434 466 480 490,272g 476 478 481 484,284r 432 438 452 492,294r 448 452 480 482,304g 466 470 480 506,314g 396 426 472 480,
323r 402 426 438 474,334r 426 436 440 474,344r 430 442 462 466,354g 436 448 458 466,364g 386 402 450 456,374r 380 402 430 456,
385g 322 324 430 470,395r 324 324 366 396,404g 296 318 366 368,414g 290 310 320 352,424r 306 310 384 386,435g 244 352 384 446,
445r 340 354 604 630,455r 572 602 654 712,464r 626 654 657 740,474r 632 656 706 730,486r 696 702 718 752,495g 666 686 716 728,
505r 676 688 708 720,515r 702 706 720 740,525r 708 712 726 728,536g 708 710 726 732,546g 664 666 716 718,556g 632 662 666 714,
566g 625 648 668 680,577r 646 648 712 722,587g 660 692 714 728,597g 646 648 700 704,606g 632 645 650 660,616g 534 578 646 656,
627r 572 578 666 690,638r 646 664 682 692,647g 644 650 680 720,657g 594 596 648 684,667r 560 596 626 646,678r 556 624 674 724,
688r 640 672 766 828,698g 616 674 766 820,707g 138 490 674 676,717r 362 490 510 564,728r 395 508 516 518,738r 497 512 580 594,
748g 516 528 578 602,757g 506 514 530 542,767r 470 513 532 534,778r 514 528 552 554,788r 530 548 572 578,798r 566 570 632 654,
809g 598 602 632 675,818r 602 604 698 706,829g 668 672 700 720,839g 654 656 674 680,849r 626 656 668 690,858r 614 664 726 774,
870r 632 714 728 740,880g 566 570 728 742,889r 548 568 638 648,899g 604 630 640 672,909r 610 628 674 706,920g 570 624 674 742,
930r 576 626 634 670,940g 548 578 632 658,949g 518 554 578 594,959r 508 554 628 632,970g 578 608 630 636,980g 558 576 616 618,
990g 512 522 578 580,1000r 512 522 526 552,1010g 522 530 538 546` },
  { x: 700, y: 340, bars: `
121g 508 518 594 597,131g 488 512 522 524,140g 472 506 514 530,150g 456 490 508 530,160g 465 474 490 524,171r 470 474 522 536,
181r 520 522 554 556,191r 554 555 600 615,200g 500 510 598 630,211r 464 508 522 538,222g 444 478 518 520,232g 440 456 480 496,
241g 380 394 458 486,251g 362 366 396 404,261g 276 360 366 402,272g 258 312 360 384,282r 286 312 450 464,292r 416 450 480 496,
302r 468 476 582 592,313g 566 580 584 622,323r 566 580 592 606,333r 588 590 612 638,343r 598 612 644 656,352g 508 584 590 642,
364r 556 558 618 644,374g 588 602 618 632,383r 572 604 670 672,393g 598 620 670 678,403g 600 618 622 652,414g 584 598 624 628,
424g 578 584 600 610,434g 544 558 584 592,443g 438 444 558 570,453g 416 432 446 488,464g 312 392 434 456,474g 352 360 394 434,
484g 348 358 362 426,494g 232 242 360 368,503g 210 234 244 268,515r 232 234 298 306,524g 136 160 298 300,534g 56 144 162 164,
543r 120 144 152 180,554r 144 152 202 212,565g 164 174 198 212,575r 168 175 212 214,585g 160 168 212 216,595g 154 172 188 190,
606r 158 166 186 190,616g 176 180 186 202,626r 174 180 216 236,635r 208 214 238 250,645g 190 222 236 238,656r 214 222 244 248,
666r 222 240 254 268,676r 236 252 270 290,686r 264 268 284 312,695r 268 282 310 336,706g 164 178 310 320,716g 142 148 180 198,
726r 122 148 246 258,736g 188 198 246 262,746r 180 198 228 260,757g 184 204 228 260,767g 72 112 208 284,776g 8 10 114 142` },
  { x: 960, y: 200, bars: `
7g 352 370 432 440,16r 366 368 410 424,26g 382 384 410 432,37g 356 360 386 398,47g 344 354 366 392,57r 352 366 390 392,
67g 366 390 394 396,78r 340 392 422 432,88g 386 388 424 440,98r 378 386 410 444,107r 370 408 430 448,117g 340 382 430 432,
128r 362 382 384 412,138r 364 382 412 428,149g 350 354 412 454,158g 262 292 354 356,169r 262 292 302 332,179g 262 278 304 326,
189r 276 282 344 346,199g 290 312 344 354,208g 282 284 314 370,220r 266 282 284 406,230g 178 196 286 318,239g 102 164 200 238,
249r 130 164 192 234,259g 120 152 192 212,270g 80 94 152 154,280g 62 74 96 110,290r 60 74 84 90,299g 72 80 90 108,
309g 50 68 82 88,320r 42 66 94 96,330r 90 92 122 136,340g 36 72 122 124,350r 64 72 82 116,360r 54 82 96 100,
371g 76 86 96 114,381r 74 86 96 110,390r 96 98 184 188,400r 156 184 198 216,410r 164 198 290 296,421g 264 268 292 312,
431r 250 266 322 338,441g 246 248 320 330,450r 230 246 342 360,461g 230 240 340 354,472r 182 240 302 358,482r 294 300 408 412,
491r 384 406 478 514,501g 378 434 478 484,511r 418 432 450 454,522r 424 450 498 502,532g 476 492 496 524,541r 454 474 482 518,
552r 478 480 510 522,563g 478 488 510 518,573r 468 488 498 522,583r 466 496 544 554,592r 536 542 578 596,602g 556 572 578 608,
613r 542 572 590 618,623g 514 518 590 602,633r 518 520 598 644,643r 584 596 722 726,652r 672 720 750 770,664g 744 746 752 824,
674r 742 748 782 810,684r 766 782 822 888,693r 796 818 920 978,702g 882 896 920 1018,714r 858 894 940 946,724r 890 938 956 1010,
734r 940 954 990 1012,743g 938 954 990 998,752g 902 906 956 962,764g 892 894 908 924,774r 872 892 906 940,784g 866 876 934 938,
794r 832 876 912 940,805g 864 892 912 922,815g 830 864 894 902,824r 808 864 906 932,834g 864 886 906 938,844g 862 864 888 908,
855r 852 864 904 920,866r 900 902 956 962,876r 930 954 990 1074,885g 934 936 988 1026` }
];

function add(parent, name, attrs) {
  const el = document.createElementNS(NS, name);
  for (const key in attrs) {
    el.setAttribute(key, attrs[key]);
  }
  parent.appendChild(el);
}

// Grid: one line per 20 pips, one per trading day
const grid = document.getElementById('grid');
for (let i = 0; i < 16; i++) {
  const y = Math.round(76.6 + i * 37.96) + 0.5;
  add(grid, 'path', { d: `M56 ${y}H1425` });
}
add(grid, 'path', { d: 'M56 705.5H1425' });
for (let i = 0; i < 17; i++) {
  const x = Math.round(76.8 + i * 80.77) + 0.5;
  add(grid, 'path', { d: `M${x} 42V725` });
}

// Candles
const candles = document.getElementById('candles');
blocks.forEach(block => {
  block.bars.trim().split(',').forEach(bar => {
    const [, bx, dir, high, top, bottom, low] = bar.trim().match(/(\d+)([gr]) (\d+) (\d+) (\d+) (\d+)/);
    const color = dir === 'g' ? UP : DOWN;
    const x = block.x + bx / 3;
    const y = v => block.y + v / 3;
    add(candles, 'rect', { x: x - 0.5, y: y(high), width: 1, height: (low - high) / 3, fill: color, opacity: 0.75 });
    add(candles, 'rect', { x: x - 1.3, y: y(top), width: 2.6, height: Math.max(1, (bottom - top) / 3), fill: color });
  });
});
```
